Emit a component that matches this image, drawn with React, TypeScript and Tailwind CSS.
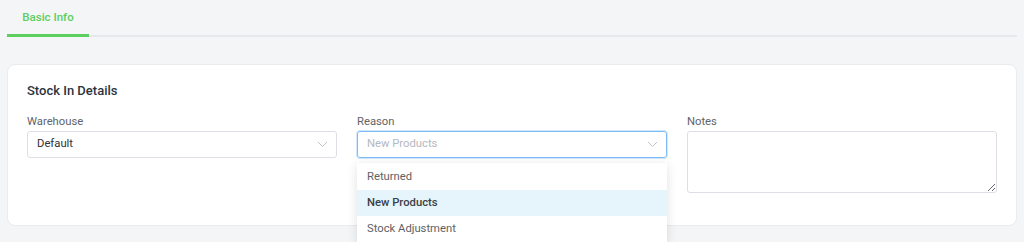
import React from "react";

const Chevron = () => (
  <svg width="11" height="7" viewBox="0 0 11 7" fill="none" className="shrink-0">
    <path d="M1 1l4.5 4.5L10 1" stroke="#c0c4cc" strokeWidth="1" />
  </svg>
);

export default function App() {
  return (
    <div
      className="relative w-full h-[242px] overflow-hidden bg-[#f4f5f7] px-[7px]"
      style={{ fontFamily: "Roboto, 'Liberation Sans', sans-serif" }}
    >
      <div className="flex h-[37px] border-b-2 border-[#e6e8ec]">
        <div className="-mb-[2px] flex h-[37px] w-[82px] items-center justify-center border-b-[3px] border-[#5ccf5e] pt-[1px] text-[11.5px] font-medium text-[#5ccf5e]">
          Basic Info
        </div>
      </div>

      <div className="mt-[27px] rounded-lg border border-[#e9ebef] bg-white px-[19px] pb-[32px] pt-[16px]">
        <div className="text-[13px] font-medium leading-[20px] text-[#2c3440]">Stock In Details</div>
        <div className="mt-[12px] grid grid-cols-3 gap-5">
          <div>
            <div className="text-[11.25px] leading-[18px] text-[#5f6368]">Warehouse</div>
            <div className="flex h-[27px] items-center justify-between rounded-[3px] border border-[#dcdfe6] pl-[9px] pr-[8px] text-[11.25px] text-[#303133]">
              <span>Default</span>
              <Chevron />
            </div>
          </div>
          <div className="relative">
            <div className="text-[11.25px] leading-[18px] text-[#5f6368]">Reason</div>
            <div className="flex h-[27px] items-center justify-between rounded-[3px] border border-[#7dbcf6] pl-[9px] pr-[8px] text-[11.25px] text-[#b4b8bf] shadow-[0_0_0_1px_rgba(125,188,246,0.35)]">
              <span>New Products</span>
              <Chevron />
            </div>
            <div className="absolute left-0 right-0 top-[50px] z-10 bg-white pt-[1px] shadow-[0_2px_10px_rgba(0,0,0,0.12)]">
              <div className="flex h-[26px] items-center px-[10px] text-[11.25px] text-[#606266]">Returned</div>
              <div className="flex h-[26px] items-center bg-[#e6f4fc] px-[10px] text-[11.25px] font-medium text-[#3a3f47]">New Products</div>
              <div className="flex h-[26px] items-center px-[10px] text-[11.25px] text-[#606266]">Stock Adjustment</div>
            </div>
          </div>
          <div>
            <div className="text-[11.25px] leading-[18px] text-[#5f6368]">Notes</div>
            <textarea className="block h-[62px] w-full resize-y rounded-[3px] border border-[#dcdfe6] px-[9px] py-[5px] text-[11.25px] outline-none" />
          </div>
        </div>
      </div>
    </div>
  );
}
